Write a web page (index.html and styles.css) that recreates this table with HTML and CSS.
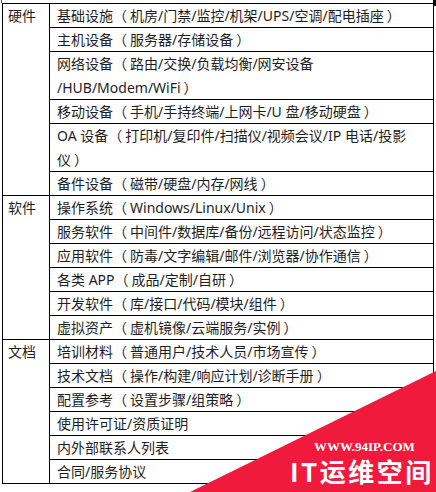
FILE: index.html
```html
<!DOCTYPE html>
<html lang="zh-CN">
<head>
<meta charset="utf-8">
<title>资产分类</title>
<link rel="stylesheet" href="styles.css">
</head>
<body>
<div class="page">
  <table class="assets">
    <colgroup><col class="c1"><col class="c2"></colgroup>
    <tbody>
      <tr><td class="cat" rowspan="6">硬件</td><td>基础设施<span class="po">（</span>机房/门禁/监控/机架/UPS/空调/配电插座<span class="pc">）</span></td></tr>
      <tr><td>主机设备<span class="po">（</span>服务器/存储设备<span class="pc">）</span></td></tr>
      <tr><td class="two">网络设备<span class="po">（</span>路由/交换/负载均衡/网安设备<br>/HUB/Modem/WiFi<span class="pc">）</span></td></tr>
      <tr><td>移动设备<span class="po">（</span>手机/手持终端/上网卡/U 盘/移动硬盘<span class="pc">）</span></td></tr>
      <tr><td class="two">OA 设备<span class="po">（</span>打印机/复印件/扫描仪/视频会议/IP 电话/投影<br>仪<span class="pc">）</span></td></tr>
      <tr><td>备件设备<span class="po">（</span>磁带/硬盘/内存/网线<span class="pc">）</span></td></tr>
      <tr><td class="cat" rowspan="6">软件</td><td>操作系统<span class="po">（</span>Windows/Linux/Unix<span class="pc">）</span></td></tr>
      <tr><td>服务软件<span class="po">（</span>中间件/数据库/备份/远程访问/状态监控<span class="pc">）</span></td></tr>
      <tr><td>应用软件<span class="po">（</span>防毒/文字编辑/邮件/浏览器/协作通信<span class="pc">）</span></td></tr>
      <tr><td>各类 APP<span class="po">（</span>成品/定制/自研<span class="pc">）</span></td></tr>
      <tr><td>开发软件<span class="po">（</span>库/接口/代码/模块/组件<span class="pc">）</span></td></tr>
      <tr><td>虚拟资产<span class="po">（</span>虚机镜像/云端服务/实例<span class="pc">）</span></td></tr>
      <tr><td class="cat" rowspan="6">文档</td><td>培训材料<span class="po">（</span>普通用户/技术人员/市场宣传<span class="pc">）</span></td></tr>
      <tr><td>技术文档<span class="po">（</span>操作/构建/响应计划/诊断手册<span class="pc">）</span></td></tr>
      <tr><td>配置参考<span class="po">（</span>设置步骤/组策略<span class="pc">）</span></td></tr>
      <tr><td>使用许可证/资质证明</td></tr>
      <tr><td>内外部联系人列表</td></tr>
      <tr><td>合同/服务协议</td></tr>
    </tbody>
  </table>
  <div class="mark-tr"></div>
  <div class="mark-tl"></div>
  <div class="watermark">
    <svg class="wm-bg" width="436" height="492" viewBox="0 0 436 492"><polygon points="436,371 190,492 436,492" fill="#ef1a3c"/></svg>
    <div class="wm-url">WWW.94IP.COM</div>
    <div class="wm-name">IT运维空间</div>
  </div>
</div>
</body>
</html>
```
FILE: styles.css
```css
html, body {
  margin: 0;
  padding: 0;
  background: #fff;
}
.page {
  position: relative;
  width: 436px;
  height: 492px;
  overflow: hidden;
  padding-top: 3px;
  padding-left: 2px;
  box-sizing: border-box;
}
.assets {
  border-collapse: collapse;
  table-layout: fixed;
  width: 432px;
  font-family: "Noto Sans", "Noto Sans CJK SC", sans-serif;
  font-size: 14px;
  color: #1e1e1e;
}
.c1 { width: 47px; }
.assets td {
  border: 1px solid #000;
  padding: 0 0 0 7px;
  line-height: 23px;
  height: 23px;
  white-space: nowrap;
  vertical-align: top;
}
.assets td.cat {
  padding-left: 5px;
}
.assets td.two {
  line-height: 23.5px;
  height: 47px;
}
.po {
  font-family: "Noto Sans CJK SC", sans-serif;
  margin-right: 3px;
}
.pc {
  font-family: "Noto Sans CJK SC", sans-serif;
  margin-left: 3px;
}
.mark-tr {
  position: absolute;
  top: 0;
  left: 433px;
  width: 3px;
  height: 6px;
  background: #000;
}
.mark-tl {
  position: absolute;
  top: 0;
  left: 1px;
  width: 1px;
  height: 3px;
  background: #555;
}
.watermark {
  position: absolute;
  left: 0;
  top: 0;
  width: 436px;
  height: 492px;
  pointer-events: none;
}
.wm-bg {
  position: absolute;
  left: 0;
  top: 0;
  display: block;
}
.wm-url {
  position: absolute;
  left: 314px;
  top: 440px;
  font-family: "Liberation Serif", serif;
  font-weight: bold;
  font-size: 13px;
  line-height: 1;
  color: #fff;
  white-space: nowrap;
}
.wm-name {
  position: absolute;
  left: 290px;
  top: 458px;
  font-family: "Noto Sans CJK SC", sans-serif;
  font-weight: bold;
  font-size: 26px;
  line-height: 1;
  letter-spacing: 2.5px;
  color: #fff;
  white-space: nowrap;
}
```
